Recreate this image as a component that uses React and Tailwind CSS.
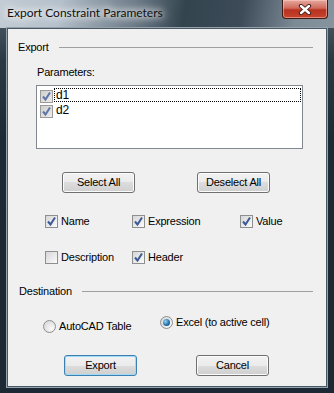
function Check({ checked, dim }) {
  return (
    <span
      className={
        "w-[13px] h-[13px] shrink-0 border flex items-center justify-center " +
        (dim
          ? "border-[#9a9a9a] bg-[linear-gradient(135deg,#cfcfcf,#ececec)]"
          : "border-[#8e8f8f] bg-[linear-gradient(135deg,#d6d6d6,#fbfbfb)]")
      }
    >
      {checked && (
        <svg width="11" height="11" viewBox="0 0 11 11">
          <path d="M2 5.5 L4.5 8.5 L9 1.5" fill="none" stroke={dim ? "#5f75a6" : "#3d5a98"} strokeWidth="2" />
        </svg>
      )}
    </span>
  );
}

function Radio({ selected }) {
  return (
    <span className="w-[13px] h-[13px] shrink-0 rounded-full border border-[#8e8f8f] bg-[radial-gradient(circle_at_70%_70%,#fafafa,#d2d2d2)] flex items-center justify-center">
      {selected && (
        <span className="w-[7px] h-[7px] rounded-full bg-[radial-gradient(circle_at_35%_35%,#8fd3f7,#1f6ba8_60%,#0d3559)]" />
      )}
    </span>
  );
}

function Btn({ label, isDefault }) {
  return (
    <div
      className={
        "w-[73px] h-[21px] rounded-[3px] border flex items-center justify-center bg-[linear-gradient(#f2f2f2_0%,#ebebeb_50%,#dddddd_50%,#cfcfcf_100%)] " +
        (isDefault
          ? "border-[#3c7fb1] shadow-[inset_0_0_0_1px_#9fdaf8]"
          : "border-[#707070] shadow-[inset_0_0_0_1px_#fbfbfb]")
      }
    >
      {label}
    </div>
  );
}

function Option({ label, checked, w }) {
  return (
    <div className={"flex items-center h-[13px] " + w}>
      <Check checked={checked} />
      <span className="ml-[3px]">{label}</span>
    </div>
  );
}

function GroupHead({ label, pl }) {
  return (
    <div className={"flex items-center h-[13px] pr-[13px] " + pl}>
      <span>{label}</span>
      <div className="flex-1 ml-[10px] border-t border-[#a0a0a0]" />
    </div>
  );
}

export default function App() {
  return (
    <div className="w-[334px] h-[393px] flex flex-col bg-[linear-gradient(180deg,#56656f_0px,#2a3944_60px,#1c2a35_140px,#1c2935_100%)] overflow-hidden">
      <div className="h-[28px] shrink-0 flex bg-[linear-gradient(100deg,#c3ccd4_0%,#b4c0cb_18%,#6c7b88_40%,#34444f_55%,#3c4b57_72%,#7c8a96_88%,#8694a0_100%)]">
        <div className="pl-[7px] pt-[5px] text-[12px] leading-[16px] text-[#101010] font-['Lato',sans-serif] [text-shadow:0_0_6px_#ffffff,0_0_10px_#ffffff,0_0_14px_#ffffff]">
          Export Constraint Parameters
        </div>
        <div className="ml-auto mr-[6px] w-[46px] h-[19px] rounded-b-[4px] border border-t-0 border-[#3f1a16] bg-[linear-gradient(#e6aa9f_0%,#d06a5c_45%,#b8321f_55%,#c6442d_100%)] shadow-[inset_0_0_0_1px_rgba(255,210,200,0.5)] flex items-center justify-center">
          <svg width="14" height="11" viewBox="0 0 14 11">
            <path d="M3 2 L11 9 M11 2 L3 9" stroke="#3a1a18" strokeWidth="4.2" strokeLinecap="round" fill="none" />
            <path d="M3 2 L11 9 M11 2 L3 9" stroke="#ffffff" strokeWidth="2.4" strokeLinecap="round" fill="none" />
          </svg>
        </div>
      </div>

      <div className="mx-[7px] w-[320px] h-[359px] shrink-0 border border-[#4a5863] shadow-[0_0_0_1px_#93a2ad] bg-[#f0f0f0] text-[11px] leading-[13px] tracking-[-0.2px] text-black font-['Liberation_Sans',Arial,sans-serif] flex flex-col">
        <div className="mt-[12px]">
          <GroupHead label="Export" pl="pl-[10px]" />
        </div>

        <div className="mt-[12px] ml-[29px] h-[13px]">Parameters:</div>

        <div className="mt-[6px] ml-[28px] w-[267px] h-[64px] border border-[#828790] bg-white pt-[2px] flex flex-col">
          <div className="h-[15px] flex items-start">
            <div className="ml-[3px] mt-[2px]">
              <Check checked dim />
            </div>
            <div className="ml-px mr-px flex-1 h-[14px] border border-dotted border-black pl-px flex items-center text-[12px]">
              d1
            </div>
          </div>
          <div className="h-[15px] flex items-start">
            <div className="ml-[3px] mt-[2px]">
              <Check checked dim />
            </div>
            <div className="ml-px flex-1 h-[14px] pl-[2px] flex items-center text-[12px]">d2</div>
          </div>
        </div>

        <div className="mt-[23px] ml-[54px] flex gap-[62px]">
          <Btn label="Select All" />
          <Btn label="Deselect All" />
        </div>

        <div className="mt-[22px] ml-[37px] flex">
          <Option label="Name" checked w="w-[87px]" />
          <Option label="Expression" checked w="w-[108px]" />
          <Option label="Value" checked w="w-[60px]" />
        </div>

        <div className="mt-[23px] ml-[37px] flex">
          <Option label="Description" w="w-[87px]" />
          <Option label="Header" checked w="w-[80px]" />
        </div>

        <div className="mt-[21px]">
          <GroupHead label="Destination" pl="pl-[11px]" />
        </div>

        <div className="mt-[18px] ml-[35px] flex items-start h-[17px]">
          <div className="mt-[4px] flex items-center w-[117px]">
            <Radio />
            <span className="ml-[3px]">AutoCAD Table</span>
          </div>
          <div className="flex items-center">
            <Radio selected />
            <span className="ml-[3px]">Excel (to active cell)</span>
          </div>
        </div>

        <div className="mt-[22px] ml-[56px] flex gap-[59px]">
          <Btn label="Export" isDefault />
          <Btn label="Cancel" />
        </div>
      </div>
    </div>
  );
}
